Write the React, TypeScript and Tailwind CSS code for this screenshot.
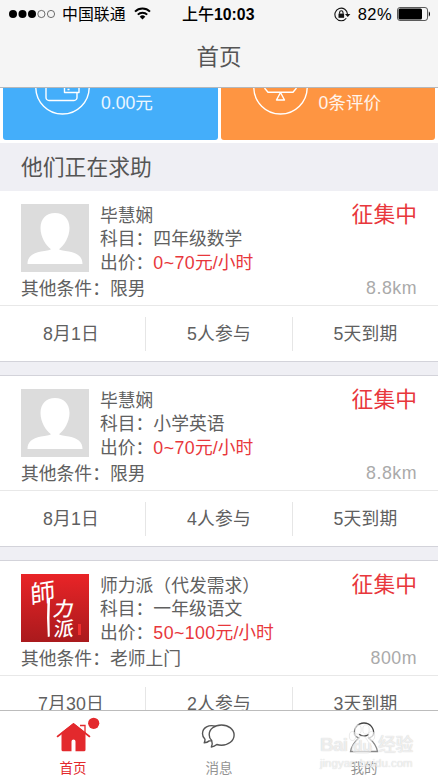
import React from 'react';
import clsx from 'clsx';

interface HelpRequest {
  id: number;
  name: string;
  subject: string;
  price: { value: string; unit: string };
  condition: string;
  distance: string;
  date: string;
  joined: string;
  expires: string;
  logo?: boolean;
}

const requests: HelpRequest[] = [
  { id: 1, name: '毕慧娴', subject: '四年级数学', price: { value: '0~70', unit: '元/小时' }, condition: '限男', distance: '8.8km', date: '8月1日', joined: '5人参与', expires: '5天到期' },
  { id: 2, name: '毕慧娴', subject: '小学英语', price: { value: '0~70', unit: '元/小时' }, condition: '限男', distance: '8.8km', date: '8月1日', joined: '4人参与', expires: '5天到期' },
  { id: 3, name: '师力派（代发需求）', subject: '一年级语文', price: { value: '50~100', unit: '元/小时' }, condition: '老师上门', distance: '800m', date: '7月30日', joined: '2人参与', expires: '3天到期', logo: true },
];

const StatusBar = () => (
  <div className="relative flex h-7 items-center justify-between pl-[9px] pr-[7px] text-[16px] leading-none text-black">
    <div className="flex items-center">
      <svg width="46" height="10" viewBox="0 0 46 10">
        {[4, 13.5, 23].map((cx) => <circle key={cx} cx={cx} cy="5" r="4" />)}
        {[32.4, 42].map((cx) => <circle key={cx} cx={cx} cy="5" r="3.6" fill="none" stroke="#333" strokeWidth="0.7" />)}
      </svg>
      <span className="ml-[7px] pt-[2px] text-[15.9px]">中国联通</span>
      <svg className="ml-[8px] -mt-px" width="17" height="13" viewBox="0 0 17 13" fill="none" stroke="#000" strokeWidth="2">
        <path d="M1 4.6a10.6 10.6 0 0 1 15 0" />
        <path d="M3.8 7.6a6.7 6.7 0 0 1 9.4 0" />
        <path d="M8.5 12.6 5.7 9.7a4 4 0 0 1 5.6 0z" fill="#000" stroke="none" />
      </svg>
    </div>
    <span className="absolute left-[182px] top-[7px] font-medium">
      上午<b className="text-[15.8px] font-bold">10:03</b>
    </span>
    <div className="flex items-center">
      <svg width="17" height="15" viewBox="0 0 17 15" fill="none" stroke="#111" strokeWidth="1.1">
        <path d="M12.3 11.2A6.3 6.3 0 1 1 13.5 7.3" />
        <path d="M11 7h5.4l-2.700 3z" fill="#111" stroke="none" />
        <rect x="4.5" y="6.6" width="5.6" height="4.2" fill="#111" stroke="none" />
        <path d="M5.600 6.800V5.400a1.700 1.700 0 0 1 3.400 0v1.400" />
      </svg>
      <span className="ml-[7px] text-[16.5px] tracking-[0.4px]">82%</span>
      <svg className="ml-[5px]" width="34" height="14" viewBox="0 0 34 14">
        <rect x="0.5" y="0.5" width="30" height="13" rx="2.5" fill="none" stroke="#333" strokeWidth="0.8" />
        <rect x="1.5" y="1.5" width="23.5" height="11" rx="1.5" />
        <path d="M31.8 4.5c1.600.600 1.600 4.400 0 5z" />
      </svg>
    </div>
  </div>
);

const Tile = ({ color, label, children }: { color: string; label: string; children: React.ReactNode }) => (
  <div className={clsx('flex h-[52px] flex-1 rounded-b-[3px] pl-[32px]', color)}>
    <svg width="56" height="30" viewBox="0 0 56 30" fill="none" stroke="#fff" strokeWidth="1.4" strokeLinejoin="round">
      <circle cx="27.5" cy="-0.7" r="26.7" />
      {children}
    </svg>
    <span className="ml-[10px] mt-[3px] text-[17.6px] leading-6 text-white/90">{label}</span>
  </div>
);

const Avatar = () => (
  <svg className="block size-[68px] shrink-0 bg-[#dcdcdc]" viewBox="0 0 68 68" fill="#fff">
    <path d="M34 9c-8.600 0-14.500 5.800-14.500 15 0 9 5.200 17.200 10.500 21.300-1.500 1.200-5 1.500-10 2.300C11 49.500 6.500 53 6.500 60h55c0-7-4.500-10.500-13.500-12.400-5-.8-8.500-1.100-10-2.300C43.300 41.200 48.500 33 48.500 24c0-9.200-5.900-15-14.500-15z" />
  </svg>
);

const ShiliLogo = () => (
  <div className="relative size-[68px] shrink-0 bg-linear-to-b from-[#e92427] to-[#aa1a1d] text-white [font-family:'Noto_Sans_CJK_TC',sans-serif]">
    <span className="absolute left-[9px] top-[2px] -rotate-3 -skew-y-6 text-[25px] leading-[30px]">師</span>
    {/* long brush tail of the first character */}
    <svg className="absolute left-[24px] top-[24px]" width="8" height="40" viewBox="0 0 8 40" fill="#fff">
      <path d="M2.500 0h2.600l-.6 20 .3 18.500-2 .5L2 20z" />
    </svg>
    <span className="absolute left-[33px] top-[22px] -skew-x-12 text-[20px] font-medium leading-6">力</span>
    <span className="absolute left-[33px] top-[43px] -skew-x-6 text-[20px] font-medium leading-[22px]">派</span>
    <span className="absolute left-[57px] top-[50px] h-[11px] w-[3px] bg-[#f0302f]" />
  </div>
);

const RequestCard = ({ item }: { item: HelpRequest }) => (
  <article className="h-[172px] shrink-0 border-y border-[#d3d3da] bg-white first:border-t-[#efeff4]">
    <div className="h-[115px] border-b border-[#e8e8e8] px-[21px] pt-[13px]">
      <div className="flex h-[68px]">
        {item.logo ? <ShiliLogo /> : <Avatar />}
        <div className="mt-[1px] ml-[11px] flex-1 leading-[23.3px]">
          <p>{item.name}</p>
          <p>科目：{item.subject}</p>
          <p>
            出价：<span className="text-[#e8373c]"><span className="tracking-[0.4px]">{item.price.value}</span>{item.price.unit}</span>
          </p>
        </div>
        <span className="-mt-[3px] text-[21.8px] leading-7 text-[#e8373c]">征集中</span>
      </div>
      <div className="mt-[5px] flex justify-between leading-6">
        <span>其他条件：{item.condition}</span>
        <span className="-mt-px tracking-[0.5px] text-[#aaa]">{item.distance}</span>
      </div>
    </div>
    <div className="flex h-[55px] items-center text-center leading-[34px] tracking-[0.2px]">
      <span className="w-[145px] pr-[3px]">{item.date}</span>
      <span className="w-[148px] border-x border-[#e6e6e6]">{item.joined}</span>
      <span className="flex-1">{item.expires}</span>
    </div>
  </article>
);

const Watermark = () => (
  <div className="pointer-events-none absolute left-[320px] top-[23px] text-white/70 [text-shadow:0_0_1px_#c4c4c4]">
    <div className="flex h-[22px] items-center text-[19px] font-bold leading-[22px]">
      <span className="w-[27px] tracking-[-0.8px]">Bai</span>
      <span className="relative w-[31px] text-center">
        <svg className="absolute -top-[11px] left-[1px]" width="28" height="32" viewBox="0 0 28 32" fill="#fff" fillOpacity="0.6" stroke="#ddd" strokeWidth="0.6">
          <ellipse cx="4.500" cy="13" rx="3.200" ry="4.500" />
          <ellipse cx="10" cy="6.500" rx="3.200" ry="4.700" />
          <ellipse cx="18" cy="6.500" rx="3.200" ry="4.700" />
          <ellipse cx="23.500" cy="13" rx="3.200" ry="4.500" />
          <path d="M14 13c-4 0-5 5-8 8-4 5-1 9 3 9h10c4 0 7-4 3-9-3-3-4-8-8-8z" />
        </svg>
        <span className="relative text-[15px]">du</span>
      </span>
      <span className="text-[18px] font-medium tracking-[-0.5px]">经验</span>
    </div>
    <div className="text-left text-[11.500px] leading-[14px]">jingyan.baidu.com</div>
  </div>
);

const TabBar = () => (
  <nav className="relative grid h-[68px] shrink-0 grid-cols-3 border-t border-[#bcbcbc] bg-white text-center text-[13.500px] leading-4 text-[#929292]">
    <div className="flex flex-col items-center text-[#e3292d]">
      <svg className="mt-[5px] ml-[8px]" width="54" height="38" viewBox="-4 0 54 38">
        <path d="M3.500 20.500 19.500 8l16 12.500" fill="none" stroke="currentColor" strokeWidth="1.600" strokeLinecap="round" />
        <path d="M19.500 7 7.500 16.500v17.200A1.500 1.500 0 0 0 9 35.200h8.500V25.500q0-2 2-2t2 2v9.700H30a1.500 1.500 0 0 0 1.500-1.500V16.500z" fill="currentColor" />
        <path d="M26 9.500h5V17" fill="none" stroke="currentColor" strokeWidth="1.300" />
        <circle cx="39.700" cy="7.300" r="5.600" fill="currentColor" />
      </svg>
      <span className="mt-[7px]">首页</span>
    </div>
    <div className="flex flex-col items-center">
      <svg className="mt-[11px]" width="36" height="32" viewBox="0 0 36 32" fill="none" stroke="#555" strokeWidth="1.400" strokeLinejoin="round">
        <path d="M10.700 18.500C9 17 8.200 15 8.200 12.700 8.200 7 13.500 3 20.500 3s12.600 4.200 12.600 10-5.600 10.200-12.600 10.200c-1.700 0-3.300-.2-4.700-.7-1.700 1.500-3.500 2.300-5.500 2.500 1-1.700 1.100-4.500.4-6.500z" />
        <path d="M14.500 4.300C8 2.300 1.500 5.500 1.500 11.700c0 2.200.8 4 2.500 5.500 0 1.600-.2 2.600-.8 3.600 2.200-.2 3.800-.9 5-1.900h2.500" />
      </svg>
      <span className="mt-[7px]">消息</span>
    </div>
    <div className="flex flex-col items-center pr-[2px]">
      <svg className="mt-[10px]" width="30" height="33" viewBox="0 0 30 33" fill="none" stroke="#444" strokeWidth="1.300" strokeLinecap="round">
        <path d="M5.500 13.500C4.500 7 9 2 15 2s10.500 5 9.500 11.500" />
        <path d="M5.500 13.500c.8 2 2.300 3 4.500 3.500-3 2.600-7.500 7.500-8.500 13.500h27c-1-6-5.500-10.900-8.500-13.500 2.200-.5 3.700-1.500 4.500-3.500" stroke="#888" />
        <path d="M10.500 13.500c2.500 2.200 6.500 2.200 9 0" />
      </svg>
      <span className="mt-[7px]">我的</span>
    </div>
    <Watermark />
  </nav>
);

const App: React.FC = () => {
  return (
    <div className="flex h-[778px] w-[438px] flex-col overflow-hidden bg-white text-[17.8px] text-[#606060] [font-family:'Liberation_Sans','Noto_Sans_CJK_SC',sans-serif]">
      <header className="h-[88px] shrink-0 border-b border-[#b5b8bb] bg-[#f5f5f5]">
        <StatusBar />
        <h1 className="mt-[13px] text-center text-[22.5px] leading-[34px] text-[#555]">首页</h1>
      </header>

      <main className="flex min-h-0 flex-1 flex-col overflow-hidden">
        <div className="flex h-[55px] shrink-0 gap-[3px] px-[3px]">
          <Tile color="bg-[#44aefa]" label="0.00元">
            <path d="M11 0v9.500a3 3 0 0 0 3 3h25a3 3 0 0 0 3-3V4.500" />
            <path d="M29.500 0v4.500H44V0M32.500 1.500h2" />
          </Tile>
          <Tile color="bg-[#fe9542]" label="0条评价">
            <path d="M11.500 0 15 4.200h25L43.500 0M27.500 4.500l-4 7.500h8z" />
          </Tile>
        </div>
        <h2 className="h-[47px] shrink-0 bg-[#efeff4] pl-[21px] text-[21.8px] leading-[49px] text-[#555]">他们正在求助</h2>
        <div className="flex flex-col gap-[13px] bg-[#efeff4]">
          {requests.map((item) => <RequestCard key={item.id} item={item} />)}
        </div>
      </main>

      <TabBar />
    </div>
  );
};

export default App;
